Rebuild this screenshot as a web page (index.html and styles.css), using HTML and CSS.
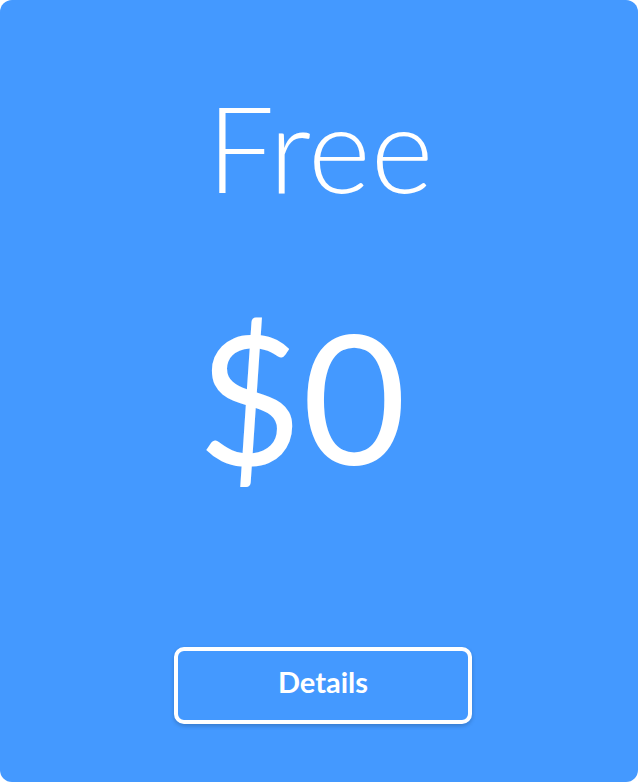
FILE: index.html
```html
<!DOCTYPE html>
<html>
<head>
<meta charset="utf-8">
<link rel="stylesheet" href="styles.css">
</head>
<body>
<div class="card">
  <h1 class="plan">Free</h1>
  <div class="price">$0</div>
  <button class="details">Details</button>
</div>
</body>
</html>
```
FILE: styles.css
```css
html, body {
  margin: 0;
  padding: 0;
  background: #ffffff;
}
.card {
  box-sizing: border-box;
  width: 638px;
  height: 782px;
  background: #4499ff;
  border-radius: 12px;
  display: flex;
  flex-direction: column;
  align-items: center;
  font-family: Lato, "Open Sans", sans-serif;
  color: #ffffff;
  padding-top: 75px;
}
.plan {
  margin: 0;
  font-size: 120px;
  font-weight: 300;
  line-height: 144px;
  padding-left: 2px;
}
.price {
  margin-top: 68px;
  font-size: 180px;
  font-weight: 400;
  line-height: 216px;
  margin-right: 34px;
}
.details {
  margin-top: 144px;
  margin-left: 8px;
  box-sizing: border-box;
  width: 298px;
  height: 77px;
  padding: 0 0 9px 0;
  border: 4px solid #ffffff;
  border-radius: 10px;
  background: transparent;
  color: #ffffff;
  font-family: Lato, sans-serif;
  font-weight: 700;
  font-size: 29px;
  box-shadow: 0 2px 4px rgba(0, 0, 0, 0.2);
  cursor: pointer;
}
```
